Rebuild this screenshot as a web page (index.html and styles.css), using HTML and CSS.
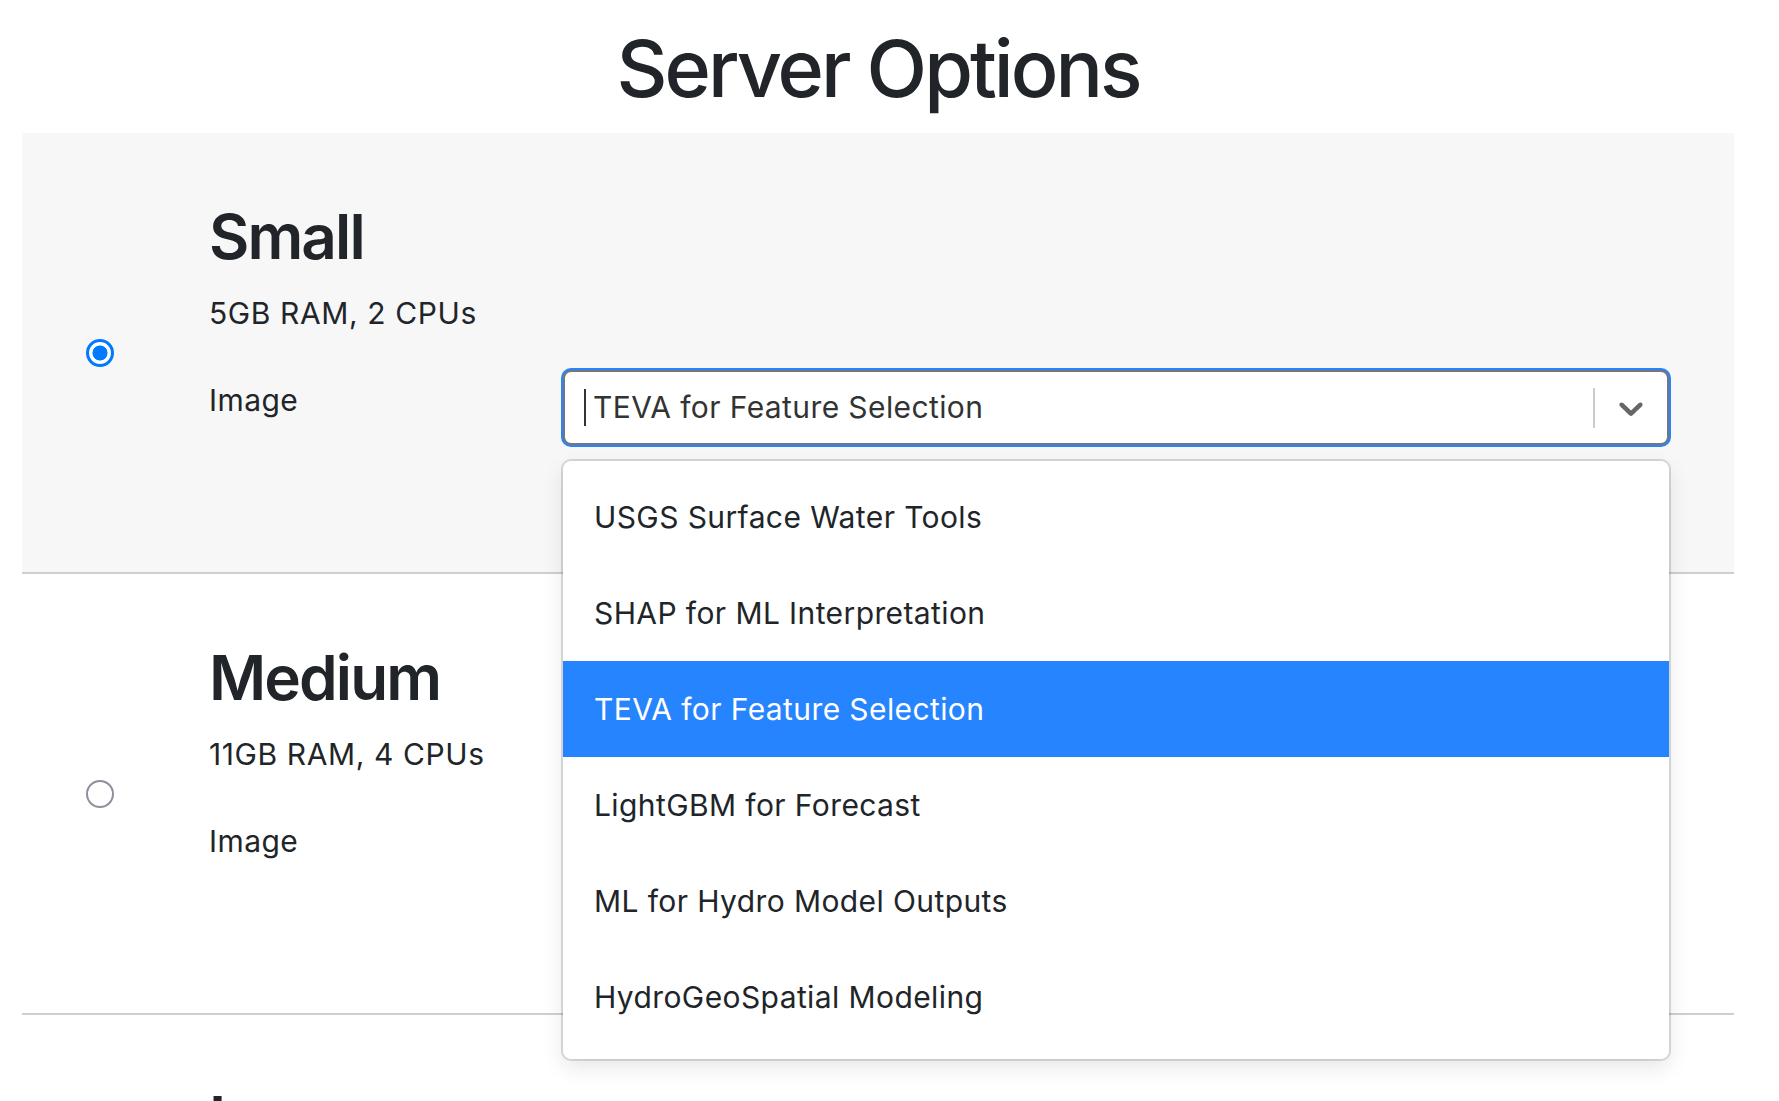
FILE: index.html
```html
<!DOCTYPE html>
<html lang="en">
<head>
<meta charset="utf-8">
<title>Server Options</title>
<link rel="stylesheet" href="styles.css">
</head>
<body>
<main class="page">
  <h1 class="page-title">Server Options</h1>
  <form class="options">
    <div class="option option--selected">
      <div class="option-radio"><input class="radio" type="radio" name="size" value="small" checked aria-label="Small"></div>
      <div class="option-body">
        <h2 class="option-name">Small</h2>
        <p class="option-desc">5GB RAM, 2 CPUs</p>
        <div class="image-row">
          <span class="image-label">Image</span>
          <div class="select">
            <div class="select-control">
              <div class="select-value"><span class="caret"></span>TEVA for Feature Selection</div>
              <span class="select-sep"></span>
              <span class="select-indicator">
                <svg class="chevron" viewBox="0 0 20 20" width="40" height="40" aria-hidden="true"><path d="M4.516 7.548c0.436-0.446 1.043-0.481 1.576 0l3.908 3.747 3.908-3.747c0.533-0.481 1.141-0.446 1.574 0 0.436 0.445 0.408 1.197 0 1.615-0.406 0.418-4.695 4.502-4.695 4.502-0.217 0.223-0.502 0.335-0.787 0.335s-0.57-0.112-0.789-0.335c0 0-4.287-4.084-4.695-4.502s-0.436-1.170 0-1.615z"/></svg>
              </span>
            </div>
            <ul class="select-menu">
              <li class="select-option">USGS Surface Water Tools</li>
              <li class="select-option">SHAP for ML Interpretation</li>
              <li class="select-option select-option--active">TEVA for Feature Selection</li>
              <li class="select-option">LightGBM for Forecast</li>
              <li class="select-option">ML for Hydro Model Outputs</li>
              <li class="select-option">HydroGeoSpatial Modeling</li>
            </ul>
          </div>
        </div>
      </div>
    </div>

    <div class="option">
      <div class="option-radio"><input class="radio" type="radio" name="size" value="medium" aria-label="Medium"></div>
      <div class="option-body">
        <h2 class="option-name">Medium</h2>
        <p class="option-desc">11GB RAM, 4 CPUs</p>
        <div class="image-row">
          <span class="image-label">Image</span>
        </div>
      </div>
    </div>

    <div class="option option--last">
      <div class="option-radio"><input class="radio" type="radio" name="size" value="large" aria-label="Large"></div>
      <div class="option-body">
        <h2 class="option-name">Large</h2>
      </div>
    </div>
  </form>
</main>
</body>
</html>
```

FILE: styles.css
```css
* {
  box-sizing: border-box;
}

html, body {
  margin: 0;
  padding: 0;
  background: #ffffff;
}

body {
  font-family: Inter, "Noto Sans", "Liberation Sans", sans-serif;
  color: #212529;
  font-size: 30px;
  line-height: 45px;
  letter-spacing: 0.4px;
}

.page {
  width: 1712px;
  margin-left: 22px;
}

.page-title {
  margin: 21px 0 17px;
  font-size: 79px;
  line-height: 95px;
  font-weight: 500;
  text-align: center;
  letter-spacing: -3px;
}

.options {
  margin: 0;
}

.option {
  display: grid;
  grid-template-columns: 187px 1fr;
  height: 441px;
  border-bottom: 2px solid #cfcfcf;
  background: #ffffff;
}

.option--selected {
  background: #f7f7f7;
  position: relative;
  z-index: 2;
}

.option--last {
  border-bottom: none;
}

.option-radio {
  display: flex;
  align-items: center;
  padding-left: 64px;
}

.radio {
  appearance: none;
  -webkit-appearance: none;
  margin: 0;
  width: 28px;
  height: 28px;
  border-radius: 50%;
  border: 2px solid #8f8f9d;
  background: #ffffff;
}

.radio:checked {
  border: 3px solid #007aff;
  background: radial-gradient(circle, #007aff 0 7.2px, #ffffff 7.8px);
}

.option-body {
  padding: 66px 65px 0 0;
}

.option-name {
  margin: 0;
  font-size: 62px;
  line-height: 76px;
  font-weight: 600;
  letter-spacing: -1.9px;
}

.option-desc {
  margin: 16px 0 0;
  letter-spacing: 0.6px;
}

.image-row {
  display: flex;
  align-items: flex-start;
  margin-top: 34px;
}

.image-label {
  flex: 0 0 354px;
  margin-top: 8px;
}

.select {
  flex: 1;
  position: relative;
}

.select-control {
  display: flex;
  align-items: center;
  height: 75px;
  background: #ffffff;
  border: 2px solid #777777;
  border-radius: 8px;
  box-shadow: 0 0 0 2px #2684ff;
}

.select-value {
  flex: 1;
  display: flex;
  align-items: center;
  padding-left: 19px;
  color: #333333;
}

.caret {
  display: inline-block;
  width: 2px;
  height: 37px;
  background: #333333;
  margin-right: 7px;
}

.select-sep {
  width: 2px;
  height: 40px;
  background: #cccccc;
}

.select-indicator {
  display: flex;
  align-items: center;
  justify-content: center;
  width: 72px;
  height: 100%;
}

.chevron {
  fill: #666666;
}

.select-menu {
  position: absolute;
  top: calc(100% + 16px);
  left: 0;
  right: 0;
  margin: 0;
  padding: 8px 0 14px;
  list-style: none;
  background: #ffffff;
  border-radius: 8px;
  box-shadow: 0 0 0 2px rgba(0, 0, 0, 0.13), 0 8px 22px rgba(0, 0, 0, 0.1);
  z-index: 5;
}

.select-option {
  display: flex;
  align-items: center;
  height: 96px;
  padding-left: 31px;
  color: #212529;
}

.select-option--active {
  background: #2684ff;
  color: #ffffff;
}
```
